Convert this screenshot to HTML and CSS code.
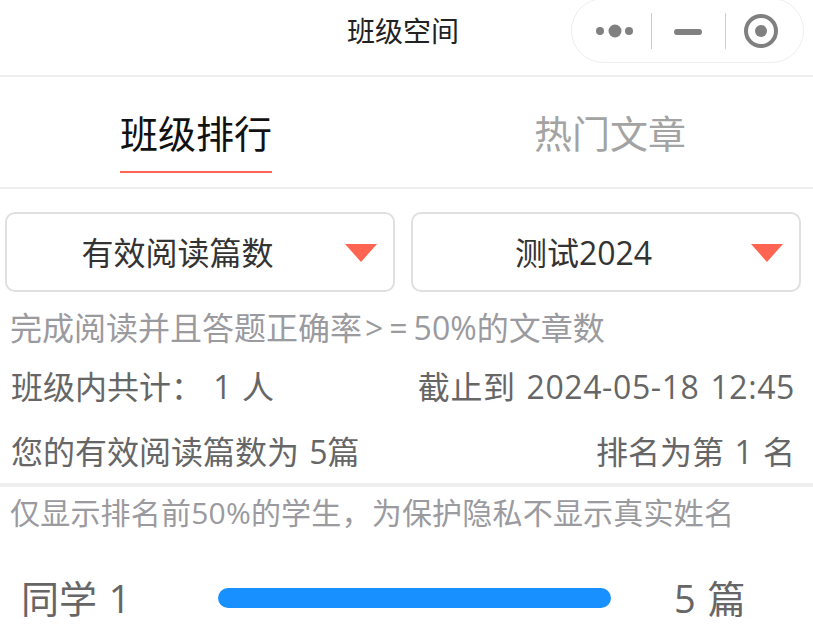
FILE: index.html
```html
<!DOCTYPE html>
<html lang="zh-CN">
<head>
<meta charset="utf-8">
<title>班级空间</title>
<link rel="stylesheet" href="styles.css">
</head>
<body>
<header class="nav">
  <h1 class="nav-title">班级空间</h1>
  <div class="capsule">
    <svg class="cap-icon" width="74" height="36" viewBox="0 0 74 36"><circle cx="23" cy="18" r="4" fill="#808080"/><circle cx="38" cy="18" r="6.5" fill="#808080"/><circle cx="52" cy="18" r="4" fill="#808080"/></svg>
    <span class="cap-sep"></span>
    <span class="cap-minus"></span>
    <span class="cap-sep"></span>
    <svg class="cap-target" width="36" height="36" viewBox="0 0 36 36"><circle cx="18" cy="18" r="15" fill="none" stroke="#808080" stroke-width="4"/><circle cx="18" cy="18" r="6" fill="#808080"/></svg>
  </div>
</header>
<nav class="tabs">
  <div class="tab tab-active"><span class="tab-label">班级排行</span></div>
  <div class="tab"><span class="tab-label">热门文章</span></div>
</nav>
<section class="selects">
  <div class="select"><span class="select-text">有效阅读篇数</span><i class="arrow"></i></div>
  <div class="select"><span class="select-text">测试2024</span><i class="arrow"></i></div>
</section>
<p class="hint hint-first">完成阅读并且答题正确率<span class="hint-op">&gt;=</span>50%的文章数</p>
<div class="row row-a"><span>班级内共计： 1 人</span><span class="row-date">截止到 2024-05-18 12:45</span></div>
<div class="row row-b"><span>您的有效阅读篇数为 5篇</span><span>排名为第 1 名</span></div>
<p class="hint hint-second">仅显示排名前50%的学生，为保护隐私不显示真实姓名</p>
<div class="rank">
  <span class="rank-name">同学 1</span>
  <div class="rank-bar"></div>
  <span class="rank-count">5 篇</span>
</div>
</body>
</html>
```
FILE: styles.css
```css
* { box-sizing: border-box; }
html, body { margin: 0; padding: 0; }
body {
  width: 813px;
  height: 637px;
  overflow: hidden;
  background: #fff;
  font-family: "Open Sans", "Noto Sans CJK SC", sans-serif;
  color: #666;
}
.nav {
  position: relative;
  height: 77px;
  border-bottom: 2px solid #eee;
  display: flex;
  align-items: flex-start;
  justify-content: center;
  padding-right: 7px;
}
.nav-title {
  margin: 0;
  padding-top: 11px;
  font-size: 28px;
  line-height: 40px;
  font-weight: 400;
  color: #222;
}
.capsule {
  position: absolute;
  left: 571px;
  top: -2px;
  width: 233px;
  height: 65px;
  border: 1px solid #eee;
  border-radius: 33px;
  display: flex;
  align-items: center;
}
.cap-icon { margin-left: 5px; flex: none; }
.cap-sep { width: 1px; height: 36px; background: #ccc; flex: none; }
.cap-minus { width: 28px; height: 6px; margin: 3px 23px 0 22px; border-radius: 3px; background: #808080; flex: none; }
.cap-target { margin-left: 17px; flex: none; }
.tabs {
  height: 112px;
  border-bottom: 2px solid #eee;
  display: grid;
  grid-template-columns: 392px 406px;
  column-gap: 15px;
}
.tab {
  display: flex;
  justify-content: center;
  color: #a3a3a3;
}
.tab-label {
  height: 96px;
  padding-top: 28px;
  font-size: 38px;
  line-height: 56px;
  white-space: nowrap;
}
.tab-active { color: #111; }
.tab-active .tab-label { border-bottom: 2px solid #ff6552; }
.selects {
  display: flex;
  gap: 16px;
  padding: 23px 12px 0 5px;
}
.select {
  position: relative;
  flex: 1;
  height: 80px;
  border: 2px solid #e0e0e0;
  border-radius: 10px;
  display: flex;
  align-items: center;
  justify-content: center;
  padding: 0 45px 2px 0;
  font-size: 32px;
  color: #333;
}
.arrow {
  position: absolute;
  right: 16px;
  top: 30px;
  width: 0;
  height: 0;
  border-left: 16px solid transparent;
  border-right: 16px solid transparent;
  border-top: 18px solid #ff6552;
}
.hint {
  margin: 0;
  padding-left: 10px;
  font-size: 30px;
  line-height: 40px;
  color: #9a9a9f;
  white-space: nowrap;
}
.hint-first { padding-top: 16px; height: 56px; font-size: 32px; }
.hint-op { margin-left: 3px; letter-spacing: 6px; }
.row {
  display: flex;
  justify-content: space-between;
  padding: 0 18px 0 11px;
  font-size: 32px;
  line-height: 44px;
  white-space: nowrap;
  word-spacing: 2px;
}
.row-date { letter-spacing: 0.6px; }
.row-a { margin-top: 17px; }
.row-b { margin-top: 21px; padding-bottom: 8px; border-bottom: 4px solid #eee; height: 57px; }
.hint-second { height: 56px; padding-top: 6px; letter-spacing: 0.2px; }
.rank {
  display: flex;
  align-items: center;
  height: 60px;
  margin-top: 25px;
  font-size: 38px;
  word-spacing: 2px;
}
.rank-name { margin: 0 0 4px 21px; width: 197px; white-space: nowrap; }
.rank-bar { width: 393px; height: 20px; border-radius: 10px; background: #1890ff; }
.rank-count { margin: 0 0 4px 63px; white-space: nowrap; }
```
